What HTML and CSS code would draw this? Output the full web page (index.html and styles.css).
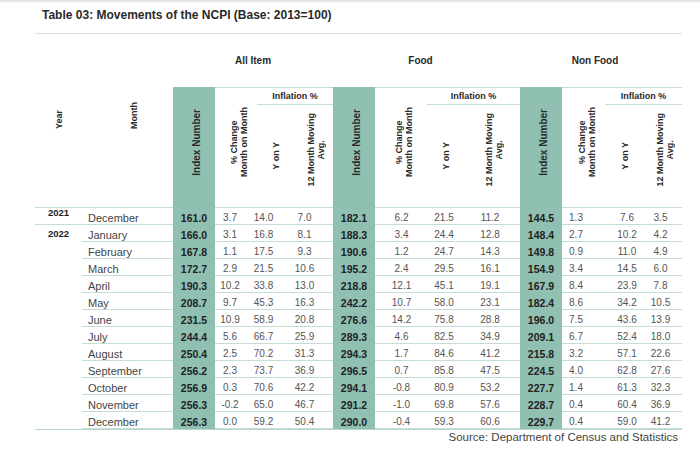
FILE: index.html
```html
<!DOCTYPE html>
<html>
<head>
<meta charset="utf-8">
<link rel="stylesheet" href="styles.css">
</head>
<body>
<div class="title">Table 03: Movements of the NCPI (Base: 2013=100)</div>
<div class="groups">
  <div class="g g-all">All Item</div>
  <div class="g g-food">Food</div>
  <div class="g g-non">Non Food</div>
</div>
<div class="head">
  <div class="hc rs hy"><span class="vt">Year</span></div>
  <div class="hc rs hm"><span class="vt">Month</span></div>
  <div class="hc rs idx"><span class="vt">Index Number</span></div>
  <div class="hc rs top chg"><span class="vt">% Change<br>Month on Month</span></div>
  <div class="hc top infl">Inflation %</div>
  <div class="hc rs idx"><span class="vt">Index Number</span></div>
  <div class="hc rs top chg"><span class="vt">% Change<br>Month on Month</span></div>
  <div class="hc top infl">Inflation %</div>
  <div class="hc rs idx"><span class="vt">Index Number</span></div>
  <div class="hc rs top chg"><span class="vt">% Change<br>Month on Month</span></div>
  <div class="hc top infl">Inflation %</div>
  <div class="hc yoy"><span class="vt">Y on Y</span></div>
  <div class="hc m12"><span class="vt">12 Month Moving<br>Avg.</span></div>
  <div class="hc yoy"><span class="vt">Y on Y</span></div>
  <div class="hc m12"><span class="vt">12 Month Moving<br>Avg.</span></div>
  <div class="hc yoy"><span class="vt">Y on Y</span></div>
  <div class="hc m12"><span class="vt">12 Month Moving<br>Avg.</span></div>
</div>
<div class="body">
  <div class="c y">2021</div><div class="c m">December</div>
  <div class="c i">161.0</div><div class="c">3.7</div><div class="c">14.0</div><div class="c pa">7.0</div>
  <div class="c i">182.1</div><div class="c">6.2</div><div class="c">21.5</div><div class="c">11.2</div>
  <div class="c i">144.5</div><div class="c pn">1.3</div><div class="c">7.6</div><div class="c pb">3.5</div>

  <div class="c y y2">2022</div><div class="c m">January</div>
  <div class="c i">166.0</div><div class="c">3.1</div><div class="c">16.8</div><div class="c pa">8.1</div>
  <div class="c i">188.3</div><div class="c">3.4</div><div class="c">24.4</div><div class="c">12.8</div>
  <div class="c i">148.4</div><div class="c pn">2.7</div><div class="c">10.2</div><div class="c pb">4.2</div>

  <div class="c m">February</div>
  <div class="c i">167.8</div><div class="c">1.1</div><div class="c">17.5</div><div class="c pa">9.3</div>
  <div class="c i">190.6</div><div class="c">1.2</div><div class="c">24.7</div><div class="c">14.3</div>
  <div class="c i">149.8</div><div class="c pn">0.9</div><div class="c">11.0</div><div class="c pb">4.9</div>

  <div class="c m">March</div>
  <div class="c i">172.7</div><div class="c">2.9</div><div class="c">21.5</div><div class="c pa">10.6</div>
  <div class="c i">195.2</div><div class="c">2.4</div><div class="c">29.5</div><div class="c">16.1</div>
  <div class="c i">154.9</div><div class="c pn">3.4</div><div class="c">14.5</div><div class="c pb">6.0</div>

  <div class="c m">April</div>
  <div class="c i">190.3</div><div class="c">10.2</div><div class="c">33.8</div><div class="c pa">13.0</div>
  <div class="c i">218.8</div><div class="c">12.1</div><div class="c">45.1</div><div class="c">19.1</div>
  <div class="c i">167.9</div><div class="c pn">8.4</div><div class="c">23.9</div><div class="c pb">7.8</div>

  <div class="c m">May</div>
  <div class="c i">208.7</div><div class="c">9.7</div><div class="c">45.3</div><div class="c pa">16.3</div>
  <div class="c i">242.2</div><div class="c">10.7</div><div class="c">58.0</div><div class="c">23.1</div>
  <div class="c i">182.4</div><div class="c pn">8.6</div><div class="c">34.2</div><div class="c pb">10.5</div>

  <div class="c m">June</div>
  <div class="c i">231.5</div><div class="c">10.9</div><div class="c">58.9</div><div class="c pa">20.8</div>
  <div class="c i">276.6</div><div class="c">14.2</div><div class="c">75.8</div><div class="c">28.8</div>
  <div class="c i">196.0</div><div class="c pn">7.5</div><div class="c">43.6</div><div class="c pb">13.9</div>

  <div class="c m">July</div>
  <div class="c i">244.4</div><div class="c">5.6</div><div class="c">66.7</div><div class="c pa">25.9</div>
  <div class="c i">289.3</div><div class="c">4.6</div><div class="c">82.5</div><div class="c">34.9</div>
  <div class="c i">209.1</div><div class="c pn">6.7</div><div class="c">52.4</div><div class="c pb">18.0</div>

  <div class="c m">August</div>
  <div class="c i">250.4</div><div class="c">2.5</div><div class="c">70.2</div><div class="c pa">31.3</div>
  <div class="c i">294.3</div><div class="c">1.7</div><div class="c">84.6</div><div class="c">41.2</div>
  <div class="c i">215.8</div><div class="c pn">3.2</div><div class="c">57.1</div><div class="c pb">22.6</div>

  <div class="c m">September</div>
  <div class="c i">256.2</div><div class="c">2.3</div><div class="c">73.7</div><div class="c pa">36.9</div>
  <div class="c i">296.5</div><div class="c">0.7</div><div class="c">85.8</div><div class="c">47.5</div>
  <div class="c i">224.5</div><div class="c pn">4.0</div><div class="c">62.8</div><div class="c pb">27.6</div>

  <div class="c m">October</div>
  <div class="c i">256.9</div><div class="c">0.3</div><div class="c">70.6</div><div class="c pa">42.2</div>
  <div class="c i">294.1</div><div class="c">-0.8</div><div class="c">80.9</div><div class="c">53.2</div>
  <div class="c i">227.7</div><div class="c pn">1.4</div><div class="c">61.3</div><div class="c pb">32.3</div>

  <div class="c m">November</div>
  <div class="c i">256.3</div><div class="c">-0.2</div><div class="c">65.0</div><div class="c pa">46.7</div>
  <div class="c i">291.2</div><div class="c">-1.0</div><div class="c">69.8</div><div class="c">57.6</div>
  <div class="c i">228.7</div><div class="c pn">0.4</div><div class="c">60.4</div><div class="c pb">36.9</div>

  <div class="c m">December</div>
  <div class="c i">256.3</div><div class="c">0.0</div><div class="c">59.2</div><div class="c pa">50.4</div>
  <div class="c i">290.0</div><div class="c">-0.4</div><div class="c">59.3</div><div class="c">60.6</div>
  <div class="c i">229.7</div><div class="c pn">0.4</div><div class="c">59.0</div><div class="c pb">41.2</div>
</div>
<div class="source">Source: Department of Census and Statistics</div>
</body>
</html>
```
FILE: styles.css
```css
* { box-sizing: border-box; margin: 0; padding: 0; }
html { background: #fff; }
body {
  font-family: "Liberation Sans", Arial, sans-serif;
  color: #2a2a2a;
  width: 700px;
  height: 455px;
  overflow: hidden;
  padding: 8px 18px 0 35px;
  background: linear-gradient(#d9d9d9, #ffffff 3px);
}
.title {
  font-size: 12px;
  font-weight: bold;
  line-height: 14px;
  padding-left: 7px;
  padding-bottom: 11px;
  border-bottom: 1px solid #d4e5e0;
  color: #2a2a2a;
}
.groups {
  display: grid;
  grid-template-columns: 47px 91px 42px 42px 38px 38px 42px 52px 38px 55px 42px 43px 40px 37px;
  margin-top: 21px;
  font-size: 10px;
  font-weight: bold;
  line-height: 12px;
}
.g { text-align: center; }
.g-all { grid-column: 3 / 7; }
.g-food { grid-column: 7 / 11; padding-right: 12px; }
.g-non { grid-column: 11 / 15; padding-right: 12px; }
.head {
  display: grid;
  grid-template-columns: 47px 91px 42px 42px 38px 38px 42px 52px 38px 55px 42px 43px 40px 37px;
  grid-template-rows: 18px 103px;
  margin-top: 20px;
}
.hc {
  display: flex;
  justify-content: center;
  align-items: center;
  border-bottom: 1px solid #c6ddd6;
  font-size: 9px;
  font-weight: bold;
  color: #2a2a2a;
}
.rs { grid-row: span 2; }
.top { border-top: 1px solid #c6ddd6; }
.hy, .hm { align-items: flex-end; padding-bottom: 78px; }
.hm { padding-left: 12px; }
.idx {
  background: #8fc0b2;
  border: none;
  font-size: 10px;
  padding-bottom: 10px;
  padding-left: 6px;
}
.chg { padding-bottom: 12px; padding-left: 6px; }
.infl { grid-column: span 2; line-height: 12px; }
.m12 { padding-bottom: 13px; padding-left: 3px; }
.vt {
  writing-mode: vertical-rl;
  transform: rotate(180deg);
  text-align: center;
  line-height: 10px;
  white-space: nowrap;
}
.body {
  display: grid;
  grid-template-columns: 47px 91px 42px 30px 37px 51px 42px 53px 32px 60px 42px 43px 44px 33px;
  grid-template-rows: repeat(13, 17px);
  border-bottom: 1px solid #b9d6cd;
}
.c {
  display: flex;
  align-items: center;
  justify-content: center;
  padding-top: 3px;
  border-bottom: 1px solid #c6ddd6;
  font-size: 10px;
  line-height: 12px;
  color: #555;
  white-space: nowrap;
}
.c.i {
  background: #8fc0b2;
  border-bottom: none;
  font-weight: bold;
  font-size: 10.5px;
  color: #222;
}
.c.m {
  justify-content: flex-start;
  padding-left: 6px;
  font-size: 11px;
  color: #444;
}
.c.y {
  align-items: flex-start;
  padding-top: 0;
  font-size: 9.5px;
  line-height: 10px;
  font-weight: bold;
  color: #222;
}
.c.y2 { grid-row: span 12; padding-top: 4px; border-bottom: none; }
.c.pa { padding-right: 6px; }
.c.pb { padding-right: 10px; }
.c.pn { padding-right: 15px; }
.source {
  text-align: right;
  font-size: 11.5px;
  line-height: 14px;
  color: #444;
  padding-right: 4px;
}
```
